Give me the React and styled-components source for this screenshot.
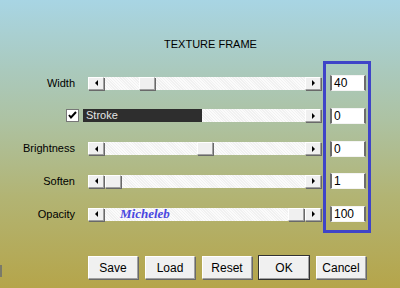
import React from 'react';
import styled, { createGlobalStyle, css } from 'styled-components';

const GlobalStyle = createGlobalStyle`
  html, body { margin: 0; padding: 0; }
  body { font-family: "Liberation Sans", Arial, sans-serif; }
`;

const rows = [
  { label: 'Width', value: '40', thumb: 35 },
  { label: 'Stroke', value: '0', stroke: true },
  { label: 'Brightness', value: '0', thumb: 93 },
  { label: 'Soften', value: '1', thumb: 1 },
  { label: 'Opacity', value: '100', thumb: 184, signature: true },
];

export default function App() {
  return (
    <Dialog>
      <GlobalStyle />
      <Title>TEXTURE FRAME</Title>
      <Rows>
        {rows.map((r) => (
          <Row key={r.label}>
            {r.stroke ? (
              <>
                <LabelCell>
                  <Check>
                    <svg width="9" height="9" viewBox="0 0 9 9">
                      <path d="M1 4 L3 6.5 L8 1" stroke="#000" strokeWidth="2" fill="none" />
                    </svg>
                  </Check>
                </LabelCell>
                <StrokeTrack>
                  <StrokeFill>Stroke</StrokeFill>
                  <Spacer />
                  <Arrow><RightTri /></Arrow>
                </StrokeTrack>
              </>
            ) : (
              <>
                <LabelCell>{r.label}</LabelCell>
                <Track>
                  <Arrow><LeftTri /></Arrow>
                  <Lane>
                    <Thumb style={{ left: r.thumb }} />
                    {r.signature && <Signature>Micheleb</Signature>}
                  </Lane>
                  <Arrow><RightTri /></Arrow>
                </Track>
              </>
            )}
            <ValueBox>{r.value}</ValueBox>
          </Row>
        ))}
      </Rows>
      <Highlight />
      <Buttons>
        <EdgeMark />
        <Button>Save</Button>
        <Button>Load</Button>
        <Button>Reset</Button>
        <Button $primary>OK</Button>
        <Button>Cancel</Button>
      </Buttons>
    </Dialog>
  );
}

const Dialog = styled.div`
position: relative;
width: 400px;
height: 288px;
overflow: hidden;
font-size: 11px;
color: #000;
background: linear-gradient(#a8d5e4 0%, #aac9bc 25%, #adc2a2 42%, #b2b474 68%, #b5a54a 100%);
`;

const Title = styled.div`
padding-top: 37px;
padding-left: 21px;
height: 14px;
line-height: 14px;
text-align: center;
`;

const Rows = styled.div`
margin-top: 24px;
display: flex;
flex-direction: column;
gap: 16.75px;
`;

const Row = styled.div`
display: flex;
align-items: center;
height: 16px;
`;

const LabelCell = styled.div`
width: 75px;
display: flex;
justify-content: flex-end;
align-items: center;
margin-right: 13px;
line-height: 13px;
`;

const Check = styled.div`
width: 11px;
height: 11px;
margin-right: -4px;
background: #fff;
border: 1px solid #777;
display: flex;
align-items: center;
justify-content: center;
`;

const Track = styled.div`
width: 233px;
height: 13px;
display: flex;
background: #f8f8f8 repeating-linear-gradient(45deg, #fbfbfb 0 1px, #f1f1f1 1px 2px);
`;

const StrokeTrack = styled(Track)`
width: 238px;
margin-left: -5px;
`;

const StrokeFill = styled.div`
width: 116px;
padding-left: 3px;
background: #2e2e2e;
color: #e4e4e4;
line-height: 13px;
`;

const Spacer = styled.div`
flex: 1;
`;

const Lane = styled.div`
position: relative;
flex: 1;
`;

const raised = css`
box-sizing: border-box;
background: #f0f0f0;
border-top: 1px solid #fff;
border-left: 1px solid #fff;
border-right: 1px solid #a0a0a0;
border-bottom: 1px solid #a0a0a0;
box-shadow: 1px 1px 0 #696969;
`;

const Arrow = styled.div`
${raised}
width: 16px;
height: 13px;
display: flex;
align-items: center;
justify-content: center;
`;

const LeftTri = styled.span`
width: 0;
height: 0;
border-top: 3px solid transparent;
border-bottom: 3px solid transparent;
border-right: 3px solid #000;
`;

const RightTri = styled.span`
width: 0;
height: 0;
border-top: 3px solid transparent;
border-bottom: 3px solid transparent;
border-left: 3px solid #000;
`;

const Thumb = styled.div`
${raised}
position: absolute;
top: 0;
width: 16px;
height: 13px;
`;

const Signature = styled.span`
position: absolute;
left: 16px;
top: -2px;
font-family: "Liberation Serif", "Times New Roman", serif;
font-style: italic;
font-weight: bold;
font-size: 13px;
color: #4a48e0;
`;

const ValueBox = styled.div`
box-sizing: border-box;
margin-left: 9px;
width: 36px;
height: 16px;
padding-left: 2px;
background: #fff;
border-left: 2px solid #6c6c6c;
border-right: 2px solid #6c6c6c;
border-top: 1px solid #f4f4f4;
border-bottom: 1px solid #f4f4f4;
font-size: 12px;
line-height: 14px;
`;

const Highlight = styled.div`
position: absolute;
left: 323px;
top: 61px;
width: 42px;
height: 166px;
border: 3px solid #3f44c8;
`;

const Buttons = styled.div`
margin-top: 34px;
display: flex;
align-items: flex-start;
gap: 7px;
`;

const EdgeMark = styled.div`
width: 2px;
height: 12px;
margin-top: 9px;
margin-right: 79px;
background: #7a7a6a;
`;

const Button = styled.div`
${raised}
width: 50px;
height: 23px;
display: flex;
align-items: center;
justify-content: center;
font-size: 12px;
${(p) => p.$primary && css`
  outline: 1px solid #333;
`}
`;
